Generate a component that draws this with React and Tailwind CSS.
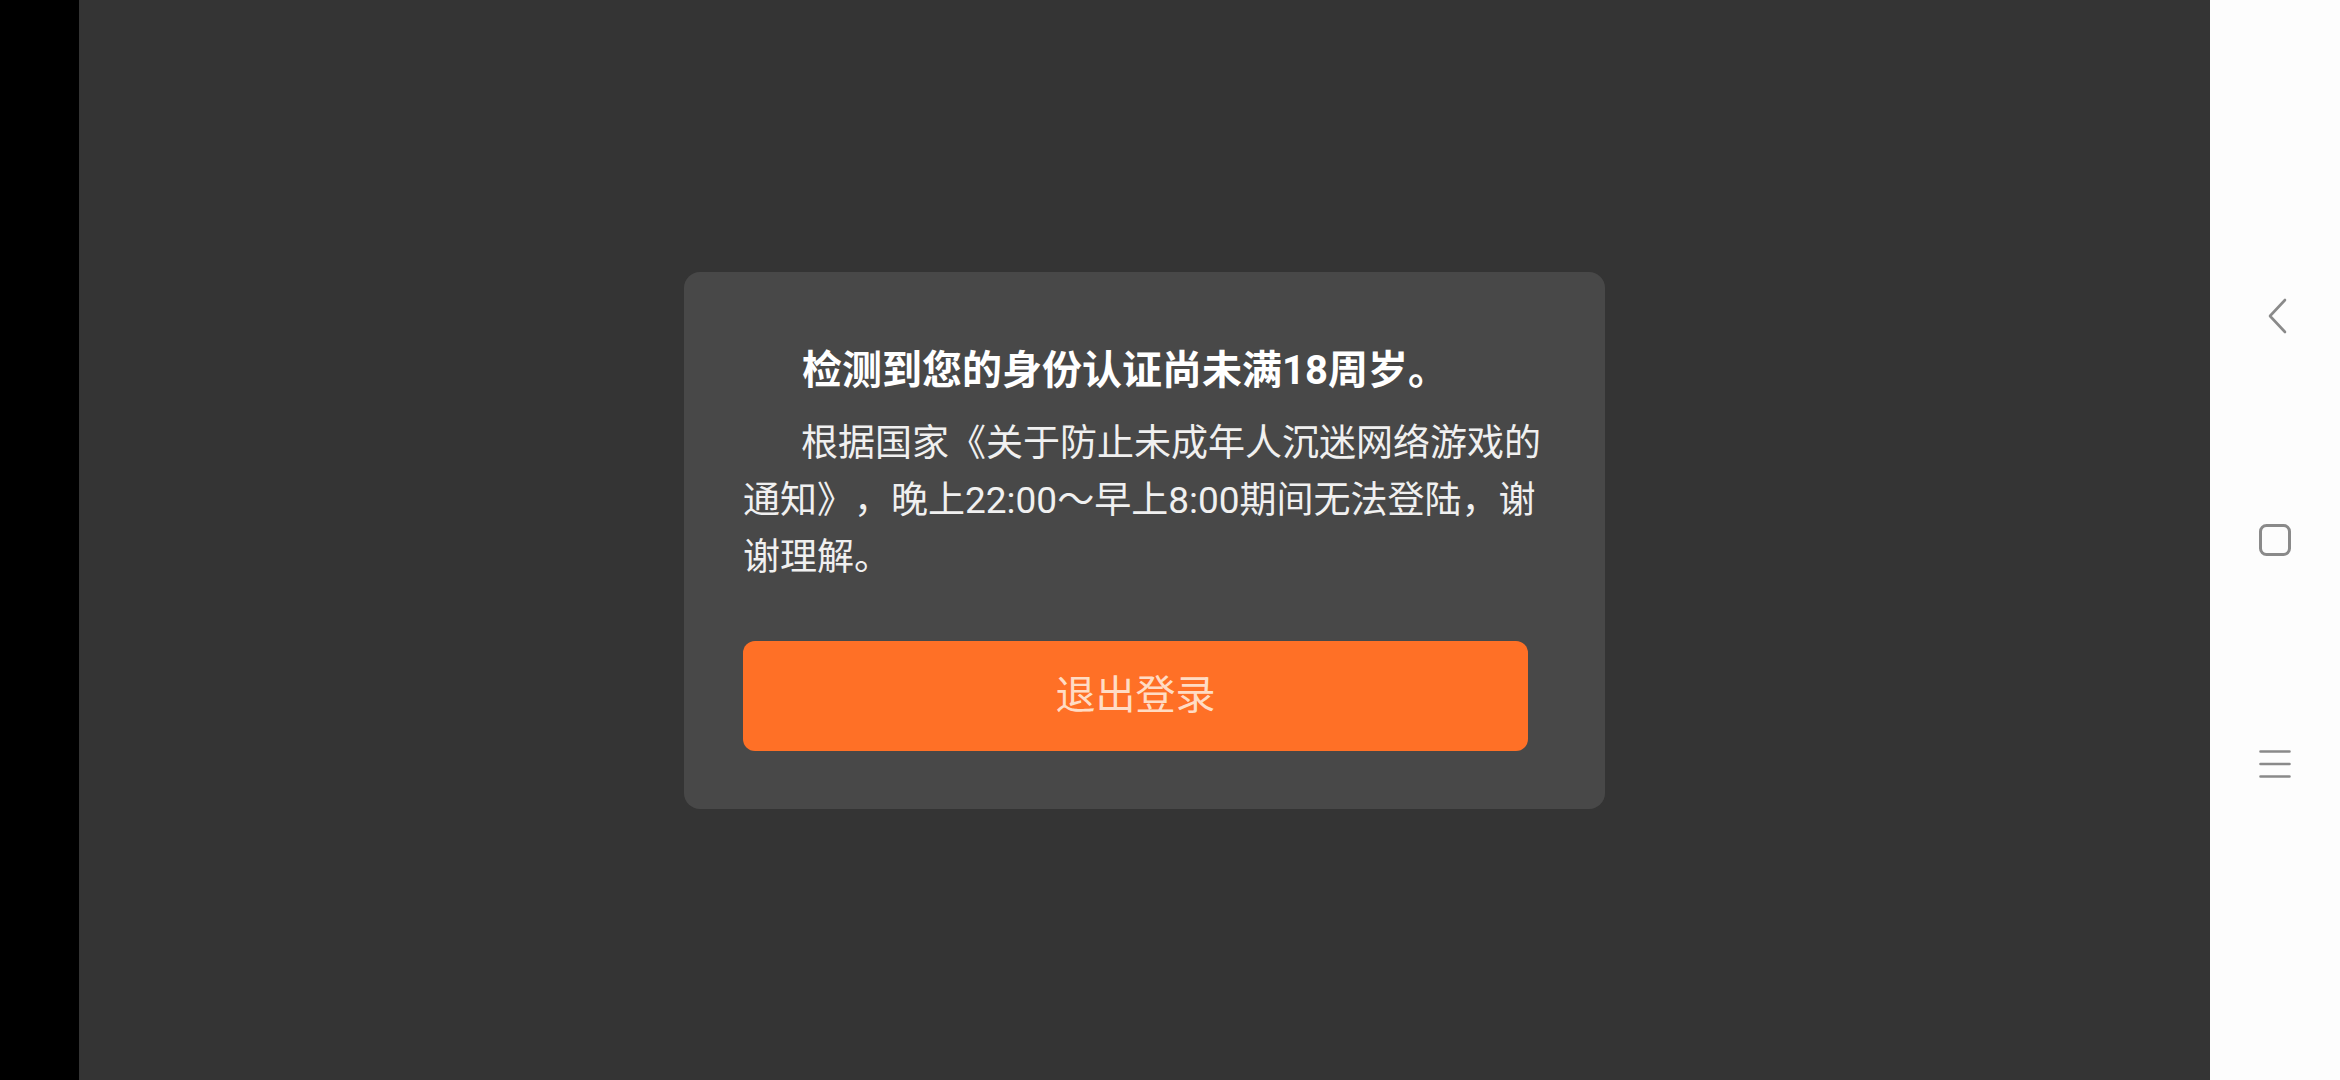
import React from 'react';

const font = { fontFamily: '"Roboto", "Noto Sans CJK SC", sans-serif' };

const NavBar = () => {
    return (
        <div className="flex w-[130px] flex-col items-center justify-center gap-[184px] bg-[#fdfdfd]">
            <div className="flex h-[40px] w-[40px] items-center justify-center pl-[4px]">
                <svg width="22" height="36" viewBox="0 0 22 36" fill="none">
                    <path
                        d="M19 2 L4 18 L19 34"
                        stroke="#8a8a8a"
                        strokeWidth="2.6"
                        strokeLinecap="round"
                        strokeLinejoin="round"
                    />
                </svg>
            </div>
            <div className="flex h-[40px] w-[40px] items-center justify-center">
                <svg width="32" height="32" viewBox="0 0 32 32" fill="none">
                    <rect
                        x="1.5"
                        y="1.5"
                        width="29"
                        height="29"
                        rx="6"
                        stroke="#8a8a8a"
                        strokeWidth="3"
                    />
                </svg>
            </div>
            <div className="flex h-[40px] w-[40px] items-center justify-center">
                <svg width="32" height="28" viewBox="0 0 32 28" fill="none">
                    <path
                        d="M1.5 1.5 H30.5 M1.5 14 H30.5 M1.5 26.5 H30.5"
                        stroke="#8a8a8a"
                        strokeWidth="2.6"
                        strokeLinecap="round"
                    />
                </svg>
            </div>
        </div>
    );
};

export default function App() {
    return (
        <div className="flex h-[1080px] w-[2340px] overflow-hidden" style={font}>
            <div className="w-[79px] bg-black" />
            <div className="flex flex-1 items-center justify-center bg-[#343434]">
                <div className="flex h-[537px] w-[921px] flex-col rounded-[16px] bg-[#484848] pl-[59px] pt-[70px]">
                    <h2 className="indent-[59px] text-[40px] font-bold leading-[58px] text-white">
                        检测到您的身份认证尚未满18周岁。
                    </h2>
                    <p className="mt-[15px] w-[808px] indent-[58px] text-[37px] leading-[57px] text-[#f0f0f0] [text-spacing-trim:space-all]">
                        根据国家《关于防止未成年人沉迷网络游戏的通知》，晚上22:00～早上8:00期间无法登陆，谢谢理解。
                    </p>
                    <button className="mt-[55px] flex h-[110px] w-[785px] items-center justify-center rounded-[12px] bg-[#ff7026] text-[40px] text-[#ffdcc4]">
                        退出登录
                    </button>
                </div>
            </div>
            <NavBar />
        </div>
    );
}
